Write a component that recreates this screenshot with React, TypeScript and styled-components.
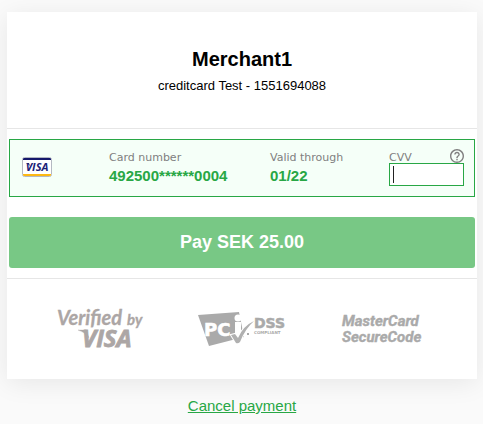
import React from "react";
import styled, { createGlobalStyle } from "styled-components";

const GREEN = "#28a745";
const SANS = '"Liberation Sans", Arial, sans-serif';

const GlobalStyle = createGlobalStyle`
  *, *::before, *::after { box-sizing: border-box; }
  body {
    margin: 0;
    background: #fafafa;
    color: #000;
    font-family: ${SANS};
  }
`;

const Page = styled.div`
  display: flex;
  flex-direction: column;
  gap: 18px;
  padding: 12px 6px 8px 7px;
`;

const Panel = styled.main`
  background: #fff;
  box-shadow: 0 4px 24px rgba(0, 0, 0, 0.08);
`;

const Header = styled.header`
  display: flex;
  flex-direction: column;
  align-items: center;
  gap: 6px;
  padding: 35px 16px 34px;
`;

const Title = styled.h1`
  margin: 0;
  font-size: 20px;
  line-height: 24px;
`;

const Reference = styled.p`
  margin: 0;
  font-size: 13px;
  line-height: 17px;
`;

const Form = styled.form`
  display: flex;
  flex-direction: column;
  gap: 20px;
  padding: 10px 2px;
  border: solid #e6e6e6;
  border-width: 1px 0;
`;

const CardRow = styled.div`
  display: grid;
  grid-template-columns: 87px 161fr 119fr 75px;
  padding: 9px 10px 7px 12px;
  border: 1px solid ${GREEN};
  background: #f5fff8;
`;

const Brand = styled.div`
  display: flex;
  align-items: center;
  padding-bottom: 4px;
`;

const Field = styled.div`
  display: flex;
  flex-direction: column;
`;

const LabelLine = styled.div`
  display: flex;
  justify-content: space-between;
  align-items: flex-start;
  height: 14px;
`;

const Label = styled.span`
  color: #808080;
  font: 11px/18px "DejaVu Sans", Verdana, sans-serif;
`;

const Value = styled.span`
  color: ${GREEN};
  font-size: 15px;
  font-weight: bold;
  line-height: 26px;
`;

const HelpButton = styled.button`
  display: flex;
  padding: 0;
  border: 0;
  background: none;
  color: #808080;
`;

const CvvBox = styled.div`
  display: flex;
  align-items: center;
  height: 23px;
  padding: 0 3px;
  border: 1px solid ${GREEN};
  background: #fff;

  &::before {
    content: "";
    width: 1px;
    height: 17px;
    background: #222;
  }
`;

const CvvInput = styled.input`
  flex: 1;
  min-width: 0;
  padding: 0;
  border: 0;
  outline: 0;
  background: transparent;
  caret-color: transparent;
  font: 14px ${SANS};
`;

const PayButton = styled.button`
  height: 51px;
  border: 0;
  border-radius: 3px;
  background: #78c885;
  color: #fff;
  font: bold 18px ${SANS};
`;

const Badges = styled.footer`
  display: grid;
  grid-template-columns: repeat(3, 1fr);
  justify-items: center;
  align-items: center;
  height: 100px;
  padding: 0 24px;
`;

const CancelLink = styled.a`
  align-self: center;
  color: ${GREEN};
  font-size: 15px;
  line-height: 18px;
`;

const VisaCard = () => (
  <svg width="30" height="20" viewBox="0 0 30 20" role="img" aria-label="Visa">
    <rect x="0.5" y="0.5" width="29" height="19" rx="2" fill="#fff" stroke="#b4b9c2" />
    <path d="M1 3V2.200Q1 1 2.200 1H27.800Q29 1 29 2.200V3Z" fill="#15186b" />
    <path d="M1 17H29V17.800Q29 19 27.800 19H2.200Q1 19 1 17.800Z" fill="#fdb813" />
    <path d="M4 6H7L8 9Q6 7 4 6Z" fill="#1c2277" />
    <text x="15" y="14" textAnchor="middle" fill="#1c2277" fontFamily="Open Sans" fontSize="11" fontWeight="700" fontStyle="italic">VISA</text>
  </svg>
);

const HelpIcon = () => (
  <svg width="14" height="14" viewBox="2 2 20 20" fill="currentColor" aria-hidden="true">
    <path d="M11 18h2v-2h-2v2zm1-16C6.480 2 2 6.480 2 12s4.480 10 10 10 10-4.480 10-10S17.520 2 12 2zm0 18c-4.410 0-8-3.590-8-8s3.590-8 8-8 8 3.590 8 8-3.590 8-8 8zm0-14c-2.210 0-4 1.790-4 4h2c0-1.100.9-2 2-2s2 .9 2 2c0 2-3 1.750-3 5h2c0-2.250 3-2.500 3-5 0-2.210-1.790-4-4-4z" />
  </svg>
);

const VerifiedByVisa = () => (
  <svg width="94" height="46" viewBox="0 0 94 46" role="img" aria-label="Verified by Visa" fill="#aca6a5" stroke="#aca6a5" strokeWidth="0.300" fontStyle="italic">
    <text x="3" y="19" fontFamily="Lato" fontSize="20" fontWeight="700">Verified</text>
    <text x="73" y="19" fontFamily="Lato" fontSize="15" fontWeight="700">by</text>
    <text x="28" y="41" fontFamily="Open Sans" fontSize="24" fontWeight="700" strokeWidth="0.800">VISA</text>
    <path d="M24 24H32L35 32Q31 26 24 24Z" />
  </svg>
);

const PciDss = () => (
  <svg width="92" height="42" viewBox="0 0 92 42" role="img" aria-label="PCI DSS compliant" fill="#aaa">
    <path d="M2 7L43 4L48 29L13 38Z" />
    <text x="8" y="28" fill="#fff" stroke="#fff" strokeWidth="0.600" fontFamily="DejaVu Sans" fontWeight="bold" fontSize="18">PC</text>
    <path d="M39 14H45V28H39Z" fill="#fff" />
    <circle cx="42" cy="10" r="3.500" fill="#fff" />
    <path d="M35 27L39 26L42 30Q47 18 58 13Q49 21 44 34Q42 36 40 35Z" fill="#b0b0b0" stroke="#fff" strokeWidth="2" paintOrder="stroke" />
    <path d="M51 25H53V27H51Z" />
    <text x="58" y="20" stroke="#aaa" strokeWidth="0.500" fontFamily="DejaVu Sans" fontWeight="bold" fontSize="14">DSS</text>
    <text x="58" y="26" fontFamily="DejaVu Sans" fontWeight="bold" fontSize="4">COMPLIANT</text>
  </svg>
);

const SecureCode = () => (
  <svg width="86" height="40" viewBox="0 0 86 40" role="img" aria-label="MasterCard SecureCode" fill="#aaa" stroke="#aaa" strokeWidth="0.400" fontFamily="Roboto" fontWeight="bold" fontStyle="italic" fontSize="15">
    <text x="2" y="17">MasterCard</text>
    <text x="2" y="33">SecureCode</text>
  </svg>
);

export default function App() {
  return (
    <>
      <GlobalStyle />
      <Page>
        <Panel>
          <Header>
            <Title>Merchant1</Title>
            <Reference>creditcard Test - 1551694088</Reference>
          </Header>
          <Form onSubmit={(event) => event.preventDefault()}>
            <CardRow>
              <Brand><VisaCard /></Brand>
              <Field>
                <LabelLine><Label>Card number</Label></LabelLine>
                <Value>492500******0004</Value>
              </Field>
              <Field>
                <LabelLine><Label>Valid through</Label></LabelLine>
                <Value>01/22</Value>
              </Field>
              <Field>
                <LabelLine>
                  <Label as="label" htmlFor="cvv">CVV</Label>
                  <HelpButton type="button" aria-label="About the CVV"><HelpIcon /></HelpButton>
                </LabelLine>
                <CvvBox><CvvInput id="cvv" inputMode="numeric" maxLength={4} autoComplete="off" /></CvvBox>
              </Field>
            </CardRow>
            <PayButton type="submit">Pay SEK 25.00</PayButton>
          </Form>
          <Badges>
            <VerifiedByVisa />
            <PciDss />
            <SecureCode />
          </Badges>
        </Panel>
        <CancelLink href="#cancel">Cancel payment</CancelLink>
      </Page>
    </>
  );
}
